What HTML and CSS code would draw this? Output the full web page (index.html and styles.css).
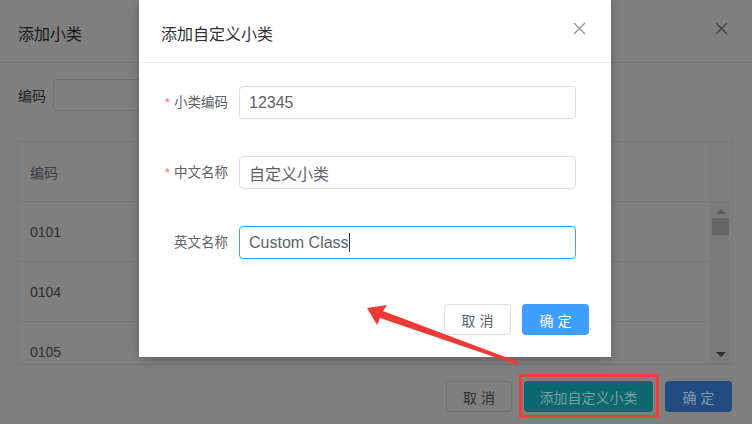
FILE: index.html
```html
<!DOCTYPE html>
<html lang="zh-CN">
<head>
<meta charset="utf-8">
<title>添加自定义小类</title>
<link rel="stylesheet" href="styles.css">
</head>
<body>
<div class="page">
  <div class="page-header">
    <span class="page-title">添加小类</span>
    <svg class="page-close" width="13" height="13" viewBox="0 0 13 13"><path d="M1 1L12 12M12 1L1 12" stroke="#3f4042" stroke-width="1.4" fill="none"/></svg>
  </div>
  <div class="page-body">
    <div class="filter">
      <span class="filter-label">编码</span>
      <div class="filter-input"></div>
    </div>
    <div class="table">
      <div class="thead">
        <div class="th">编码</div>
        <div class="gutter"></div>
      </div>
      <div class="tbody">
        <div class="rows">
          <div class="tr"><div class="td">0101</div></div>
          <div class="tr"><div class="td">0104</div></div>
          <div class="tr"><div class="td">0105</div></div>
        </div>
        <div class="scrollbar">
          <div class="arrow-up"></div>
          <div class="thumb"></div>
          <div class="track"></div>
          <div class="arrow-down"></div>
        </div>
      </div>
    </div>
  </div>
  <div class="page-footer">
    <div class="btn btn-dim-default">取 消</div>
    <div class="btn btn-dim-teal">添加自定义小类</div>
    <div class="btn btn-dim-primary">确 定</div>
  </div>
</div>

<div class="modal">
  <div class="modal-header">
    <span class="modal-title">添加自定义小类</span>
    <svg class="modal-close" width="13" height="13" viewBox="0 0 13 13"><path d="M1 1L12 12M12 1L1 12" stroke="#909399" stroke-width="1.4" fill="none"/></svg>
  </div>
  <div class="modal-body">
    <div class="form-row">
      <div class="form-label"><span class="req">*</span>小类编码</div>
      <div class="form-input">12345</div>
    </div>
    <div class="form-row">
      <div class="form-label"><span class="req">*</span>中文名称</div>
      <div class="form-input">自定义小类</div>
    </div>
    <div class="form-row">
      <div class="form-label">英文名称</div>
      <div class="form-input focused">Custom Class<span class="caret"></span></div>
    </div>
  </div>
  <div class="modal-footer">
    <div class="btn btn-default">取 消</div>
    <div class="btn btn-primary">确 定</div>
  </div>
</div>

<div class="annot-box"></div>
<svg class="annot-arrow" width="752" height="424" viewBox="0 0 752 424">
  <polygon points="367,308 387,305 383,311 519,362 518,365 380,318 377,325" fill="#ee3a36"/>
</svg>
</body>
</html>
```

FILE: styles.css
```css
* { box-sizing: border-box; }
html, body {
  margin: 0;
  padding: 0;
}
body {
  width: 752px;
  height: 424px;
  overflow: hidden;
  position: relative;
  background: #7f7f7f;
  font-family: "Liberation Sans", "Noto Sans CJK SC", sans-serif;
}

/* dimmed background dialog */
.page {
  width: 752px;
  height: 424px;
  background: #7f7f7f;
  display: flex;
  flex-direction: column;
}
.page-header {
  height: 63px;
  border-bottom: 1px solid #767677;
  display: flex;
  justify-content: space-between;
  align-items: flex-start;
  padding: 24px 24px 0 18px;
}
.page-title {
  font-size: 16px;
  line-height: 22px;
  color: #181819;
}
.page-close { margin-top: -2px; }

.page-body {
  padding: 16px 19px 0 17px;
}
.filter {
  display: flex;
  align-items: center;
  padding-left: 1px;
}
.filter-label {
  width: 35px;
  font-size: 14px;
  color: #242526;
}
.filter-input {
  width: 200px;
  height: 32px;
  border: 1px solid #6e7073;
  border-radius: 4px;
}
.table {
  margin-top: 30px;
  height: 224px;
  border: 1px solid #76777a;
  display: flex;
  flex-direction: column;
}
.thead {
  height: 60px;
  display: flex;
  border-bottom: 1px solid #76777a;
}
.th {
  flex: 1;
  display: flex;
  align-items: center;
  padding-left: 12px;
  font-size: 14px;
  color: #3c3d40;
}
.gutter {
  width: 21px;
  border-left: 1px solid #7a7b7d;
  border-right: 1px solid #7a7b7d;
  margin-right: 1px;
}
.tbody {
  flex: 1;
  display: flex;
  overflow: hidden;
}
.rows { flex: 1; }
.tr {
  height: 60px;
  border-bottom: 1px solid #76777a;
  display: flex;
  align-items: center;
}
.td {
  padding-left: 12px;
  font-size: 14px;
  color: #2e2f31;
}
.scrollbar {
  width: 19px;
  margin-right: 2px;
  background: #7a7a7a;
  display: flex;
  flex-direction: column;
  align-items: center;
}
.arrow-up, .arrow-down {
  width: 0;
  height: 0;
  border-left: 5px solid transparent;
  border-right: 5px solid transparent;
}
.arrow-up {
  margin-top: 7px;
  border-bottom: 5px solid #5c5c5c;
}
.arrow-down {
  margin-bottom: 7px;
  border-top: 5px solid #2e2e2e;
}
.thumb {
  margin-top: 4px;
  width: 17px;
  height: 17px;
  background: #666;
}
.track { flex: 1; }

.page-footer {
  display: flex;
  justify-content: flex-end;
  gap: 12px;
  padding: 16px 20px 0 0;
}

.btn {
  height: 31px;
  border-radius: 4px;
  font-size: 14px;
  display: flex;
  align-items: center;
  justify-content: center;
  white-space: pre;
}
.btn-dim-default {
  width: 66px;
  border: 1px solid #6e7073;
  color: #2e2f31;
}
.btn-dim-teal {
  width: 129px;
  background: #0a686e;
  color: #7a9ea0;
}
.btn-dim-primary {
  width: 67px;
  background: #204c80;
  color: #8597b0;
}

/* modal over the mask */
.modal {
  position: absolute;
  left: 139px;
  top: 0;
  width: 472px;
  height: 357px;
  background: #fff;
  box-shadow: 0 2px 10px rgba(0, 0, 0, 0.25);
  display: flex;
  flex-direction: column;
}
.modal-header {
  height: 63px;
  border-bottom: 1px solid #ebeef5;
  display: flex;
  justify-content: space-between;
  align-items: flex-start;
  padding: 24px 25px 0 22px;
}
.modal-title {
  font-size: 16px;
  line-height: 22px;
  color: #303133;
}
.modal-close { margin-top: -2px; }
.modal-body {
  padding: 23px 35px 0 22px;
}
.form-row {
  display: flex;
  align-items: center;
  margin-bottom: 37px;
}
.form-row:last-child { margin-bottom: 0; }
.form-label {
  width: 78px;
  padding-right: 11px;
  text-align: right;
  font-size: 13.5px;
  line-height: 20px;
  color: #606266;
}
.req {
  color: #f56c6c;
  margin-right: 4px;
}
.form-input {
  flex: 1;
  height: 33px;
  border: 1px solid #dcdfe6;
  border-radius: 4px;
  padding-left: 9px;
  display: flex;
  align-items: center;
  font-size: 16px;
  color: #606266;
}
.form-input.focused { border-color: #4a9ee6; }
.caret {
  display: inline-block;
  width: 1px;
  height: 19px;
  background: #303133;
}
.modal-footer {
  margin-top: 45px;
  display: flex;
  justify-content: flex-end;
  gap: 11px;
  padding: 0 22px 0 0;
}
.btn-default {
  width: 67px;
  border: 1px solid #dcdfe6;
  color: #606266;
}
.btn-primary {
  width: 67px;
  background: #409eff;
  color: #fff;
}

/* annotations */
.annot-box {
  position: absolute;
  left: 519px;
  top: 374px;
  width: 140px;
  height: 44px;
  border: 3px solid #e8403d;
}
.annot-arrow {
  position: absolute;
  left: 0;
  top: 0;
  pointer-events: none;
}
```
